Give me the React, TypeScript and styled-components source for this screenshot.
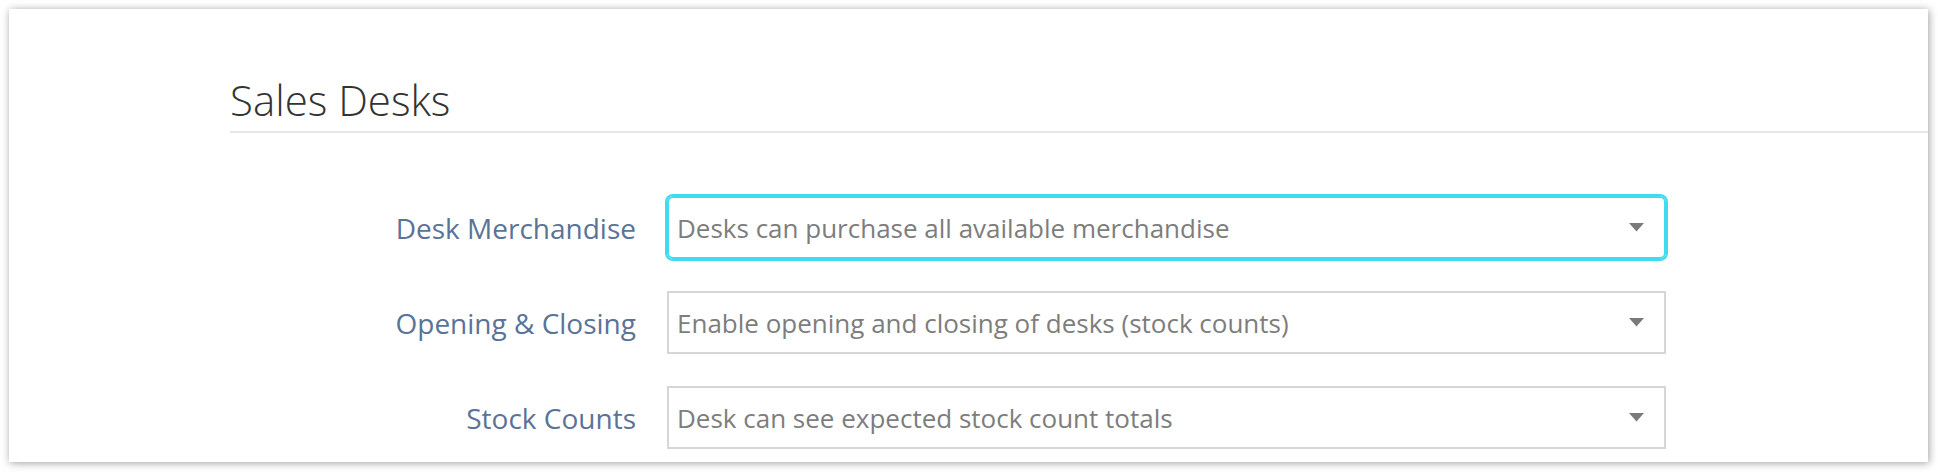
import React from 'react'
import styled, { createGlobalStyle } from 'styled-components'

const GlobalStyle = createGlobalStyle`
  html, body {
    margin: 0;
    padding: 0;
    background: #ffffff;
  }
  body {
    font-family: 'Open Sans', 'Noto Sans', sans-serif;
  }
`

const Page = styled.div`
  padding: 9px 10px 10px 9px;
  height: 472px;
  box-sizing: border-box;
`

const Card = styled.section`
  background: #fff;
  box-shadow: 1px 1px 8px rgba(0, 0, 0, 0.38);
  padding: 62px 0 12px 221px;
  height: 453px;
  box-sizing: border-box;
`

const Title = styled.h2`
  margin: 0;
  font-size: 42px;
  font-weight: 300;
  line-height: 57px;
  color: #333;
  padding-bottom: 3px;
  border-bottom: 2px solid #e6e6e6;
`

const Form = styled.div`
  display: flex;
  flex-direction: column;
  gap: 32px;
  margin-top: 63px;
`

const Row = styled.div`
  display: flex;
  align-items: center;
  gap: 31px;
`

const Label = styled.label`
  width: 406px;
  text-align: right;
  font-size: 28px;
  color: #5a7397;
  white-space: nowrap;
`

const Select = styled.div<{ $focused?: boolean }>`
  width: 999px;
  height: 63px;
  box-sizing: border-box;
  display: flex;
  align-items: center;
  justify-content: space-between;
  padding: 0 20px 0 8px;
  border: 2px solid ${p => (p.$focused ? '#3fdbef' : '#d6d6d6')};
  border-radius: ${p => (p.$focused ? '6px' : '0')};
  box-shadow: ${p => (p.$focused ? '0 0 0 2px #3fdbef' : 'none')};
  font-size: 26px;
  color: #7d7d7d;
  white-space: nowrap;
`

const Arrow = () => (
  <svg width="15" height="9" viewBox="0 0 15 9">
    <polygon points="0,0 15,0 7.5,8.5" fill="#7a7a7a" />
  </svg>
)

const rows = [
  { label: 'Desk Merchandise', value: 'Desks can purchase all available merchandise', focused: true },
  { label: 'Opening & Closing', value: 'Enable opening and closing of desks (stock counts)' },
  { label: 'Stock Counts', value: 'Desk can see expected stock count totals' },
]

const App: React.FC = () => {
  return (
    <Page>
      <GlobalStyle />
      <Card>
        <Title>Sales Desks</Title>
        <Form>
          {rows.map(r => (
            <Row key={r.label}>
              <Label>{r.label}</Label>
              <Select $focused={r.focused}>
                <span>{r.value}</span>
                <Arrow />
              </Select>
            </Row>
          ))}
        </Form>
      </Card>
    </Page>
  )
}

export default App
